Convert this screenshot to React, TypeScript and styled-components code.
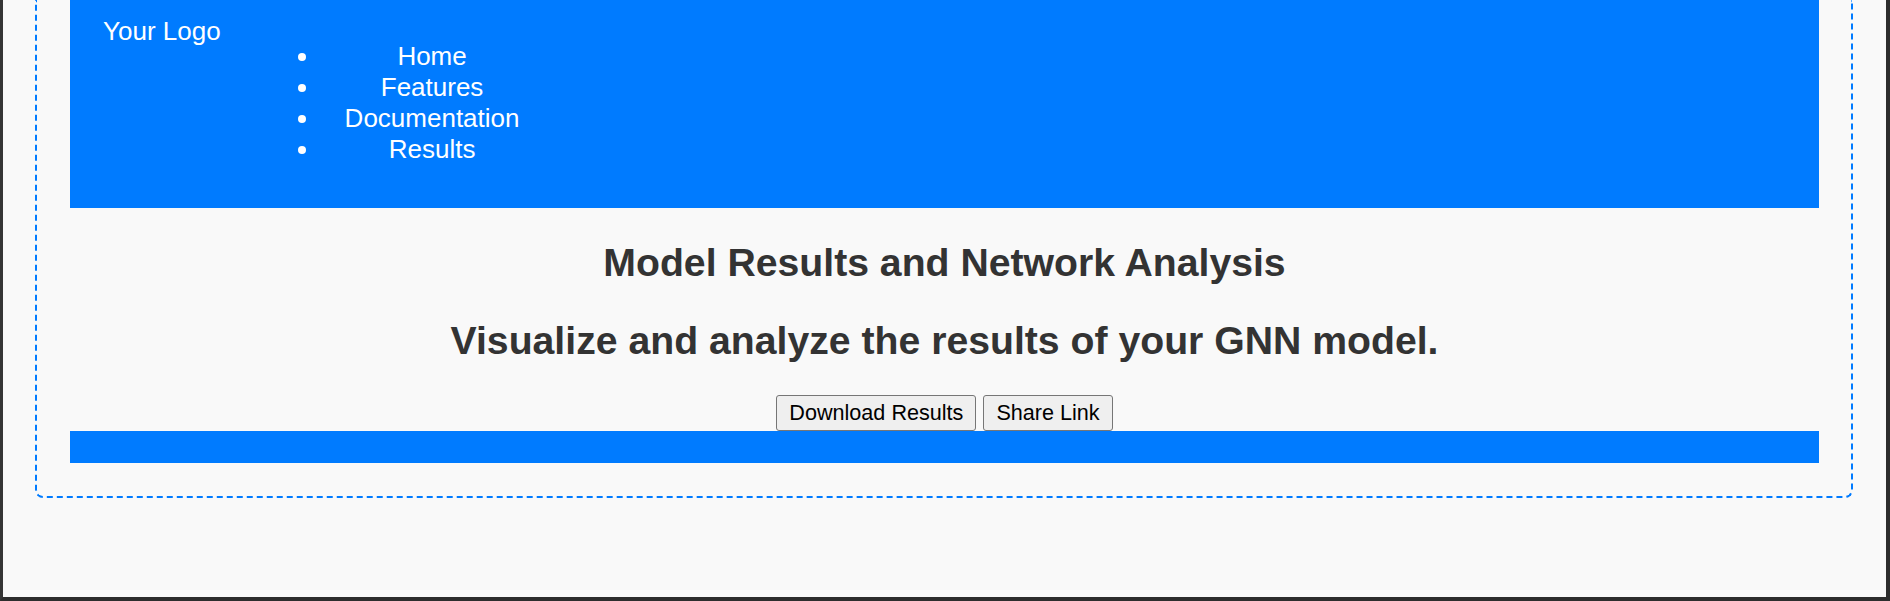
import styled, { createGlobalStyle } from "styled-components"

const blue = "#007bff"
const pageBg = "#f9f9f9"
const textDark = "#333333"

const GlobalStyle = createGlobalStyle`
  html,
  body {
    margin: 0;
    padding: 0;
    background: #2d2d2d;
  }
  body {
    font-family: "Liberation Sans", Arial, sans-serif;
  }
`

const navItems = ["Home", "Features", "Documentation", "Results"]

const App = () => {
  return (
    <>
      <GlobalStyle />
      <Window>
        <Container>
          <Header>
            <Logo>Your Logo</Logo>
            <NavList>
              {navItems.map((item) => (
                <NavItem key={item}>{item}</NavItem>
              ))}
            </NavList>
          </Header>
          <Main>
            <Heading>Model Results and Network Analysis</Heading>
            <Heading>Visualize and analyze the results of your GNN model.</Heading>
            <ButtonRow>
              <ActionButton>Download Results</ActionButton>
              <ActionButton>Share Link</ActionButton>
            </ButtonRow>
          </Main>
          <Footer />
        </Container>
      </Window>
    </>
  )
}
export default App

const Window = styled.div`
  box-sizing: border-box;
  height: 601px;
  background: ${pageBg};
  border-left: 3px solid #353535;
  border-right: 4px solid #2d2d2d;
  border-bottom: 4px solid #2d2d2d;
  padding: 0 33px 0 32px;
  overflow: hidden;
`

const Container = styled.div`
  border: 2px dashed ${blue};
  border-top: none;
  border-radius: 0 0 8px 8px;
  padding: 0 32px 33px 33px;
`

const Header = styled.header`
  display: flex;
  align-items: flex-start;
  background: ${blue};
  color: #ffffff;
  padding: 16px 33px 17px;
  font-size: 26px;
`

const Logo = styled.div`
  line-height: normal;
`

const NavList = styled.ul`
  margin: 25px 0 26px 36px;
  padding-left: 64px;
  list-style: disc;
`

const NavItem = styled.li`
  line-height: 31px;
  text-align: center;
  padding: 0 24px;
`

const Main = styled.main`
  text-align: center;
  color: ${textDark};
`

const Heading = styled.h2`
  font-size: 39.2px;
  font-weight: bold;
  line-height: 46px;
  margin: 32px 0 31px;
`

const ButtonRow = styled.div`
  display: flex;
  justify-content: center;
  gap: 7px;
`

const ActionButton = styled.button`
  font-family: "Liberation Sans", Arial, sans-serif;
  font-size: 21.6px;
  line-height: normal;
  color: #000000;
  background: #efefef;
  border: 1px solid #767676;
  border-radius: 3px;
  padding: 4px 12px;
`

const Footer = styled.footer`
  background: ${blue};
  height: 32px;
`
